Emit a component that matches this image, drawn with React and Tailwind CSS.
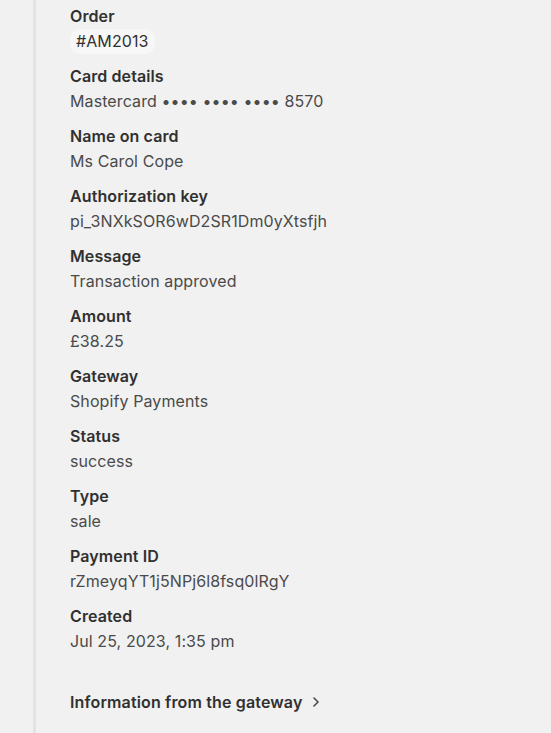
import React from 'react';

const rows = [
  { label: 'Order', value: '#AM2013', badge: true },
  { label: 'Card details', value: 'Mastercard •••• •••• •••• 8570' },
  { label: 'Name on card', value: 'Ms Carol Cope' },
  { label: 'Authorization key', value: 'pi_3NXkSOR6wD2SR1Dm0yXtsfjh' },
  { label: 'Message', value: 'Transaction approved' },
  { label: 'Amount', value: '£38.25' },
  { label: 'Gateway', value: 'Shopify Payments' },
  { label: 'Status', value: 'success' },
  { label: 'Type', value: 'sale' },
  { label: 'Payment ID', value: 'rZmeyqYT1j5NPj6l8fsq0lRgY' },
  { label: 'Created', value: 'Jul 25, 2023, 1:35 pm' },
];

const App = () => {
  return (
    <div className="min-h-screen bg-[#f1f1f1] font-['Inter',sans-serif] tracking-[0.1px] flex">
      <div className="w-[33px] shrink-0" />
      <div className="border-l-[3px] border-[#e3e3e3] flex-1 pl-[34px] pt-1 pb-6">
        <div className="flex flex-col gap-[11px]">
          {rows.map((row) => (
            <div key={row.label}>
              <div className="h-[25px] leading-6 text-[16px] font-semibold text-[#303030]">{row.label}</div>
              {row.badge ? (
                <div className="h-6 flex items-center">
                  <span className="inline-block rounded-[10px] bg-[#f7f7f7] px-[6px] h-[25px] leading-[25px] text-[16px] text-[#303030]">
                    {row.value}
                  </span>
                </div>
              ) : (
                <div className="h-6 leading-6 text-[16px] text-[#4a4a4a]">{row.value}</div>
              )}
            </div>
          ))}
        </div>
        <button type="button" className="mt-[37px] h-6 flex items-center gap-[9px] text-[16px] font-semibold text-[#303030] tracking-[0.15px]">
          Information from the gateway
          <svg width="8" height="10" viewBox="0 0 8 10" fill="none">
            <path d="M2 1l4 4-4 4" stroke="#4a4a4a" strokeWidth="1.6" strokeLinecap="round" strokeLinejoin="round" />
          </svg>
        </button>
      </div>
    </div>
  );
};

export default App;
